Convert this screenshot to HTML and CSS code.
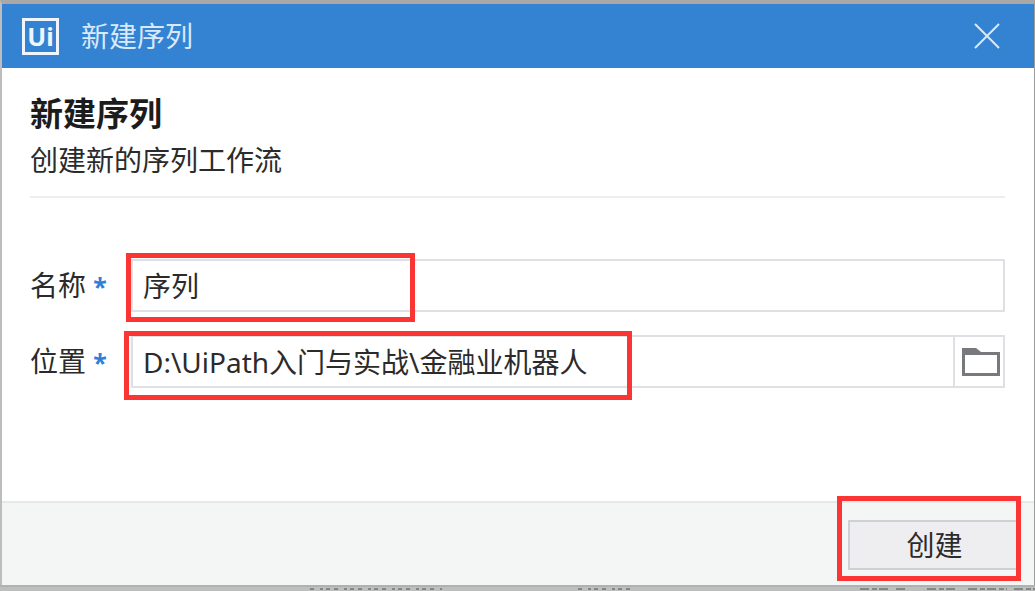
FILE: index.html
```
<!DOCTYPE html>
<html lang="zh-CN">
<head>
    <meta charset="UTF-8">
    <meta name="viewport" content="width=device-width, initial-scale=1.0">
    <title>新建序列</title>
    <link rel="stylesheet" href="styles.css">
</head>
<body>
    <main class="window">
        <header class="titlebar">
            <span class="logo">Ui</span>
            <span class="title">新建序列</span>
            <button class="close" type="button" aria-label="关闭">
                <svg width="26" height="26" viewBox="0 0 26 26">
                    <path d="M1 1L25 25M25 1L1 25" fill="none" stroke="#d9e9fa" stroke-width="2"/>
                </svg>
            </button>
        </header>
        <section class="content">
            <h1>新建序列</h1>
            <p class="subtitle">创建新的序列工作流</p>
            <form class="fields" id="sequence">
                <label for="name">名称 <span class="star">*</span></label>
                <div class="field">
                    <input id="name" type="text" value="序列">
                    <span class="mark mark-name"></span>
                </div>
                <label for="location">位置 <span class="star">*</span></label>
                <div class="field">
                    <input id="location" type="text" value="D:\UiPath入门与实战\金融业机器人">
                    <button class="browse" type="button" aria-label="浏览">
                        <svg width="38" height="28" viewBox="0 0 38 28">
                            <path d="M0 0H14L19 4H38V28H0Z" fill="#77797c"/>
                            <path d="M3 7H35V25H3Z" fill="#ffffff"/>
                        </svg>
                    </button>
                    <span class="mark mark-location"></span>
                </div>
            </form>
        </section>
        <footer class="actions">
            <div class="action">
                <button class="create" type="submit" form="sequence">创建</button>
                <span class="mark mark-create"></span>
            </div>
        </footer>
    </main>
    <!-- tops of the text lines behind the window -->
    <svg class="behind" width="1035" height="6" viewBox="0 0 1035 6">
        <path d="M0 1H1035" stroke="#a2a4a5" stroke-width="1"/>
        <path d="M310 4H442M578 4H630" stroke="#85858a" stroke-width="2" stroke-dasharray="4 6 3 3 4 4"/>
        <path d="M860 4H888M896 4H906M927 4H958M968 4H1007M1014 4H1035" stroke="#85868a" stroke-width="2" stroke-dasharray="9 3 5 2"/>
    </svg>
</body>
</html>
```
FILE: styles.css
```
*{
    box-sizing: border-box;
}

body{
    margin: 0;
    min-height: 100vh;
    display: flex;
    flex-direction: column;
    background-color: #bdbebe;
    color: #2b2b2b;
    font-family: "Noto Sans", "Noto Sans CJK SC", sans-serif;
    font-size: 28px;
    line-height: 40px;
}

button, input{
    font: inherit;
    color: inherit;
}

.window{
    flex: 1;
    display: flex;
    flex-direction: column;
    border-top: 4px solid #a9a8a6;
    border-left: 2px solid #bdbdbd;
    border-right: 1px solid #9c9c9c;
    background-color: #ffffff;
}

.titlebar{
    height: 64px;
    padding: 0 34px 0 20px;
    display: flex;
    align-items: center;
    background-color: #3483d3;
    color: #d9e9fa;
}

.logo{
    width: 37px;
    height: 37px;
    border: 3px solid #eef5fc;
    display: flex;
    justify-content: center;
    align-items: center;
    color: #eef5fc;
    font-size: 25px;
    font-weight: bold;
}

.title{
    margin-left: 22px;
}

.close{
    margin-left: auto;
    padding: 0;
    border: 0;
    display: flex;
    background: none;
}

.content{
    flex: 1;
    padding: 24px 29px 0 28px;
}

h1{
    margin: 0;
    font-size: 33px;
    line-height: 44px;
    color: #1c1c1c;
}

.subtitle{
    margin: 0;
    padding-bottom: 12px;
    border-bottom: 2px solid #eeeeee;
    line-height: 48px;
}

.fields{
    margin-top: 61px;
    display: grid;
    grid-template-columns: 101px 1fr;
    row-gap: 23px;
    align-items: center;
}

.star{
    color: #2f7fd6;
    font-size: 25px;
    font-weight: bold;
}

.field{
    position: relative;
    height: 53px;
    display: flex;
    border: 2px solid #dfe0e3;
}

.field input{
    flex: 1;
    min-width: 0;
    padding: 0 10px;
    border: 0;
    outline: 0;
    background: none;
}

.browse{
    width: 50px;
    padding: 0 0 0 4px;
    border: 0;
    border-left: 2px solid #dfe0e3;
    display: flex;
    justify-content: center;
    align-items: center;
    background: none;
}

.actions{
    height: 84px;
    padding: 17px 13px 0 0;
    display: flex;
    justify-content: flex-end;
    border-top: 2px solid #e6e8ea;
    background-color: #f4f6f6;
}

.action{
    position: relative;
    width: 173px;
    height: 50px;
}

.create{
    width: 100%;
    height: 100%;
    padding: 0;
    border: 2px solid #cfd0d5;
    background-color: #eeedf0;
}

/* red highlight frames */
.mark{
    position: absolute;
    border: 5px solid #fb3434;
    pointer-events: none;
}

.mark-name{
    top: -8px;
    left: -7px;
    width: 289px;
    height: 69px;
}

.mark-location{
    top: -6px;
    left: -9px;
    width: 508px;
    height: 69px;
}

.mark-create{
    top: -24px;
    left: -11px;
    width: 184px;
    height: 85px;
}

.behind{
    display: block;
    width: 100%;
    height: 6px;
}
```
